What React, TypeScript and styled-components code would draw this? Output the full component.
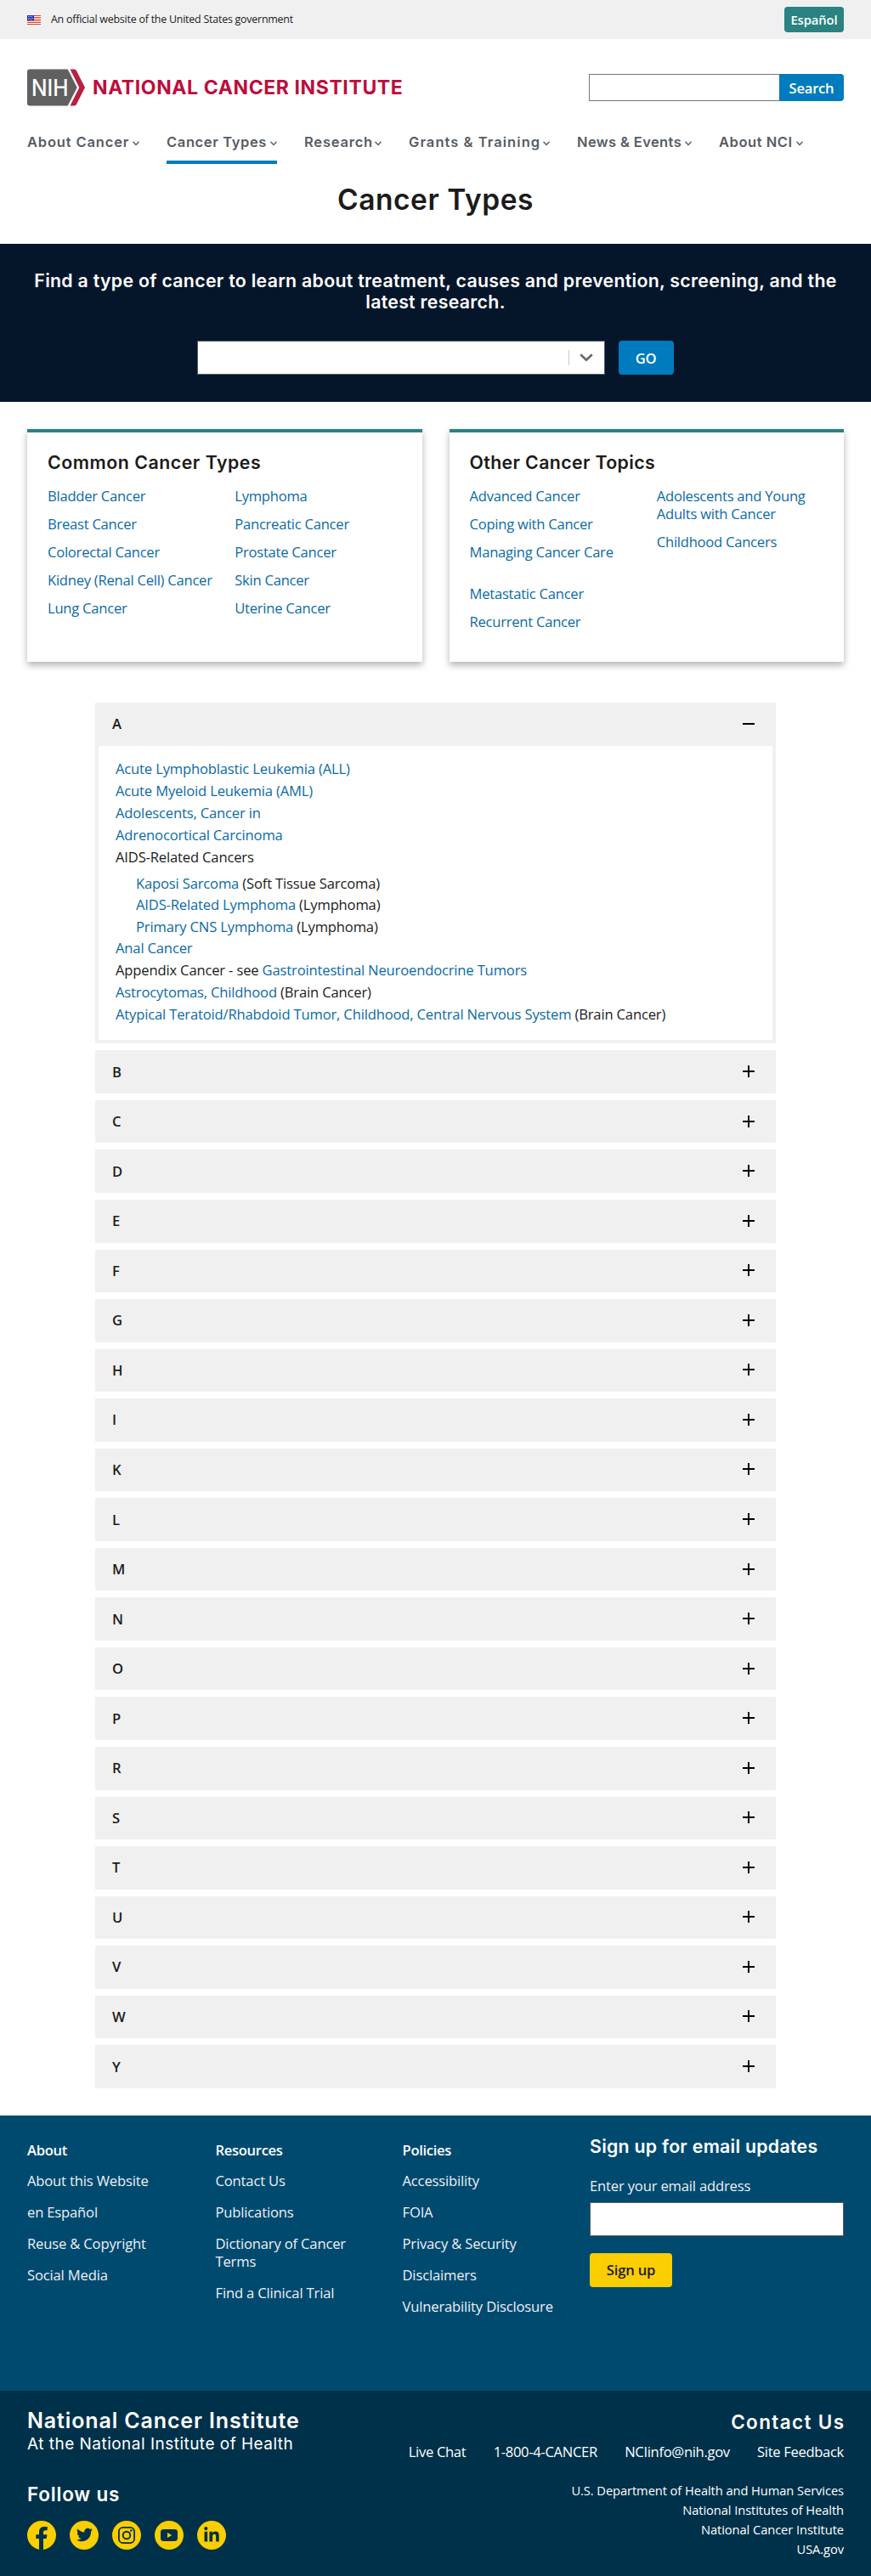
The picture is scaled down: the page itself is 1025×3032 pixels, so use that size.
import React from "react";
import styled, { createGlobalStyle } from "styled-components";
import { FaTwitter, FaLinkedinIn } from "react-icons/fa";

const bodyFont = `"Open Sans", "Noto Sans", sans-serif`;
const headFont = `Inter, "Open Sans", sans-serif`;

const GlobalStyle = createGlobalStyle`
  *, *::before, *::after { box-sizing: border-box; }
  body { margin: 0; background: #fff; color: #1b1b1b; font: 16.6px/21px ${bodyFont}; letter-spacing: -0.25px; }
  h1, h2, h3, p, ul { margin: 0; padding: 0; }
  ul { list-style: none; }
  a { color: inherit; text-decoration: none; }
  button, input { font: inherit; letter-spacing: inherit; border: 0; padding: 0; margin: 0; border-radius: 0; }
  svg { display: block; }
`;

const Banner = styled.div`
  display: flex;
  align-items: center;
  height: 46px;
  padding: 0 32px;
  background: #f0f0f0;
  font-size: 12.4px;
  letter-spacing: -0.21px;
  line-height: 16px;
`;
const BannerText = styled.p`
  margin-left: 12px;
`;
const LanguageLink = styled.a`
  width: 70px;
  height: 30px;
  margin-left: auto;
  border-radius: 4px;
  background: #2a8282;
  color: #fff;
  font-size: 14.8px;
  font-weight: 600;
  line-height: 30px;
  letter-spacing: -0.1px;
  text-align: center;
`;

const Header = styled.header`
  padding: 35px 32px 0;
`;
const BrandRow = styled.div`
  display: flex;
  align-items: center;
  justify-content: space-between;
  height: 44px;
`;
const Brand = styled.a`
  display: flex;
  align-items: center;
  gap: 8px;
  color: #bb0e3d;
  font: 700 23px/30px ${headFont};
  letter-spacing: 0.6px;
  white-space: nowrap;
`;
const SearchForm = styled.form`
  display: flex;
  width: 300px;
  height: 32px;
`;
const SearchInput = styled.input`
  flex: 1;
  min-width: 0;
  border: 1px solid #71767a;
  border-right: 0;
  background: #fff;
`;
const SearchButton = styled.button`
  width: 76px;
  border-radius: 0 4px 4px 0;
  background: #007bbd;
  color: #fff;
  font-weight: 600;
`;

const Nav = styled.nav`
  display: flex;
  gap: 32px;
  margin-top: 30px;
`;
const NavItem = styled.a<{ $width: number; $spacing: number; $current?: boolean }>`
  display: flex;
  justify-content: space-between;
  width: ${(p) => p.$width}px;
  padding-bottom: 10px;
  border-bottom: 4px solid ${(p) => (p.$current ? "#007bbd" : "transparent")};
  color: #565c65;
  font: 600 16.5px/24px ${headFont};
  letter-spacing: ${(p) => p.$spacing}px;
  white-space: nowrap;

  svg { margin-top: 11px; flex: none; }
`;
const PageTitle = styled.h1`
  height: 94px;
  padding-top: 18px;
  font: 600 33.5px/48px ${headFont};
  letter-spacing: 0.57px;
  text-align: center;
`;

const Hero = styled.section`
  height: 186px;
  padding: 31px 32px 0;
  background: #05162b;
`;
const HeroText = styled.h2`
  color: #fff;
  font: 600 21.3px/25px ${headFont};
  letter-spacing: 0.29px;
  text-align: center;
`;
const HeroForm = styled.form`
  display: flex;
  justify-content: center;
  gap: 16px;
  margin: 33px 0 0 -1px;
`;
const Combo = styled.div`
  display: flex;
  align-items: center;
  justify-content: flex-end;
  width: 480px;
  height: 40px;
  padding-right: 13px;
  border: 1px solid #565c65;
  background: #fff;
`;
const ComboDivider = styled.span`
  width: 1px;
  height: 18px;
  margin: 0 12px 1px 0;
  background: #c6cace;
`;
const Button = styled.button<{ $kind: "primary" | "accent"; $width: number }>`
  width: ${(p) => p.$width}px;
  height: 40px;
  border-radius: 4px;
  background: ${(p) => (p.$kind === "primary" ? "#007bbd" : "#face00")};
  color: ${(p) => (p.$kind === "primary" ? "#fff" : "#1b1b1b")};
  font-weight: 600;
`;

const Cards = styled.section`
  display: grid;
  grid-template-columns: 1fr 1fr;
  gap: 32px;
  padding: 32px 32px 0;
`;
const Card = styled.article`
  height: 274px;
  padding: 22.4px 24px 0;
  border-top: 4px solid #2a8282;
  background: #fff;
  box-shadow: 0 4px 8px rgba(0, 0, 0, 0.3);
`;
const CardTitle = styled.h3<{ $spacing: number }>`
  font: 600 21.3px/26px ${headFont};
  letter-spacing: ${(p) => p.$spacing}px;
`;
const CardColumns = styled.div`
  display: grid;
  grid-template-columns: 1fr 1fr;
  column-gap: 24px;
  align-items: start;
  margin-top: 15.2px;
`;
const LinkList = styled.ul<{ $gap: number }>`
  display: flex;
  flex-direction: column;
  gap: ${(p) => p.$gap}px;
`;
const LinkGroups = styled.div`
  display: grid;
  gap: 28px;
`;
const Link = styled.a`
  color: #0b6aa6;
`;

const AccordionList = styled.section`
  display: flex;
  flex-direction: column;
  gap: 8px;
  padding: 48px 112px 32px;
`;
const AccordionHeader = styled.button`
  display: flex;
  align-items: center;
  justify-content: space-between;
  width: 100%;
  height: 50.55px;
  padding: 0 25px 1px 20px;
  background: #f0f0f0;
  color: #1b1b1b;
  font-weight: 600;
`;
const AccordionPanel = styled.div`
  padding: 14px 20px 17px;
  border: solid #f0f0f0;
  border-width: 0 4px 4px;
  line-height: 26px;
  letter-spacing: -0.17px;
`;
const NestedList = styled.ul`
  padding: 5px 0 0 24px;
  line-height: 25.6px;
`;

const FooterTop = styled.footer`
  display: grid;
  grid-template-columns: 189.5px 188px 188.5px 299px;
  column-gap: 32px;
  height: 324px;
  padding: 30px 32px 0;
  background: #004a70;
  color: #f0f0f0;
  letter-spacing: -0.17px;
`;
const FooterHeading = styled.h3`
  margin-bottom: 15px;
  color: #fff;
  font-size: 16.6px;
  font-weight: 600;
  line-height: 21px;
  letter-spacing: -0.32px;
`;
const SignUp = styled.form`
  display: flex;
  flex-direction: column;
  align-items: flex-start;
  margin-top: -7px;
`;
const SignUpTitle = styled.h3`
  color: #fff;
  font: 600 21.3px/26px ${headFont};
  letter-spacing: 0.28px;
`;
const Label = styled.label`
  margin: 23.5px 0 8.5px;
`;
const EmailInput = styled.input`
  width: 100%;
  height: 40px;
  margin-bottom: 20px;
  border: 1px solid #565c65;
  background: #fff;
`;

const FooterBottom = styled.footer`
  display: flex;
  justify-content: space-between;
  height: 218px;
  padding: 20px 32px 0;
  background: #00314a;
  color: #fff;
`;
const Agency = styled.h2`
  font: 600 25px/30px ${headFont};
  letter-spacing: 0.87px;
`;
const AgencySub = styled.p`
  margin-top: 1px;
  font: 400 19px/24px ${headFont};
  letter-spacing: 0.48px;
`;
const FooterTitle = styled.h3<{ $spacing: number }>`
  margin-right: -${(p) => p.$spacing}px;
  font: 600 22.5px/28px ${headFont};
  letter-spacing: ${(p) => p.$spacing}px;
`;
const Follow = styled.div`
  margin-top: 33px;
`;
const SocialRow = styled.div`
  display: flex;
  gap: 16px;
  margin-top: 17px;
`;
const SocialCircle = styled.a`
  display: grid;
  place-items: center;
  width: 34px;
  height: 34px;
  overflow: hidden;
  border-radius: 50%;
  background: #face00;
  color: #00314a;
`;
const Contact = styled.div`
  display: flex;
  flex-direction: column;
  align-items: flex-end;
  padding-top: 3px;
`;
const ContactLinks = styled.div`
  display: flex;
  gap: 32.3px;
  margin: 10px 0 24px;
  letter-spacing: -0.33px;
`;
const AgencyLinks = styled.ul`
  font-size: 14.7px;
  line-height: 23px;
  letter-spacing: -0.08px;
  text-align: right;
`;

const Flag = () => (
  <svg width="16" height="11" viewBox="0 0 16 11" shapeRendering="crispEdges">
    <rect width="16" height="11" fill="#fff" />
    {[0, 2, 4, 6, 8, 10].map((y) => (
      <rect key={y} y={y} width="16" height="1" fill="#db3e1f" />
    ))}
    <rect width="8" height="6" fill="#1e33b1" />
    {[[1, 1], [3, 1], [5, 1], [2, 3], [4, 3], [6, 3], [1, 4], [3, 5], [5, 5]].map(([x, y]) => (
      <rect key={`${x}-${y}`} x={x} y={y} width="1" height="1" fill="#d6dbf5" />
    ))}
  </svg>
);

const NihMark = () => (
  <svg width="69" height="44" viewBox="0 0 69 44">
    <path d="M3 .5H47.7L58.7 22 47.7 43.5H3Q0 43.5 0 40.5V3.5Q0 .5 3 .5Z" fill="#606060" />
    <path d="M50.5 .5H55.3Q57 .5 57.9 2L68 22 57.9 42Q57 43.5 55.3 43.5H50.5L61.3 22Z" fill="#ba1f40" />
    <text x="5" y="31.6" fill="#fff" fontFamily="Inter, sans-serif" fontSize="26.5" fontWeight="500" letterSpacing="0" textLength="43.5" lengthAdjust="spacingAndGlyphs">NIH</text>
  </svg>
);

const NavChevron = () => (
  <svg width="8" height="6" viewBox="0 0 8 6">
    <path d="M.5 .8 4 4.4 7.5 .8" fill="none" stroke="#565c65" strokeWidth="1.4" />
  </svg>
);

const ComboChevron = () => (
  <svg width="16" height="10" viewBox="0 0 16 10">
    <path d="M1.2 1.2 8 7.8 14.8 1.2" fill="none" stroke="#666" strokeWidth="2.6" />
  </svg>
);

const ToggleIcon = ({ open }: { open: boolean }) => (
  <svg width="14" height="14" viewBox="0 0 14 14">
    <path d={open ? "M0 7H14" : "M0 7H14M7 0V14"} stroke="#000" strokeWidth="2" shapeRendering="crispEdges" />
  </svg>
);

const FacebookIcon = () => (
  <svg width="34" height="34" viewBox="0 0 34 34" fill="currentColor">
    <path d="M14 34V21H10.3V16.2H14V13.2C14 9 16.5 7 20 7H23.7V11.3H21.3C19.6 11.3 19 12.3 19 13.8V16.2H23.4L22.7 21H19V34Z" />
  </svg>
);
const InstagramIcon = () => (
  <svg width="34" height="34" viewBox="0 0 34 34" fill="none" stroke="currentColor">
    <rect x="7.9" y="7.9" width="18.2" height="18.2" rx="4.8" strokeWidth="1.8" />
    <circle cx="17" cy="17" r="4.3" strokeWidth="1.9" />
    <circle cx="22.4" cy="11.5" r="1.3" fill="currentColor" stroke="none" />
  </svg>
);
const YoutubeIcon = () => (
  <svg width="34" height="34" viewBox="0 0 34 34">
    <rect x="7" y="10" width="20" height="14" rx="3.4" fill="currentColor" />
    <path d="M15 13.9 20.2 17 15 20.1Z" fill="#face00" />
  </svg>
);

const navItems = [
  { label: "About Cancer", width: 132, spacing: 0.84 },
  { label: "Cancer Types", width: 130, spacing: 0.63, current: true },
  { label: "Research", width: 91, spacing: 0.79 },
  { label: "Grants & Training", width: 166, spacing: 1.05 },
  { label: "News & Events", width: 135, spacing: 0.38 },
  { label: "About NCI", width: 99, spacing: 0.55 },
];

const commonTypes = [
  ["Bladder Cancer", "Breast Cancer", "Colorectal Cancer", "Kidney (Renal Cell) Cancer", "Lung Cancer"],
  ["Lymphoma", "Pancreatic Cancer", "Prostate Cancer", "Skin Cancer", "Uterine Cancer"],
];

type Entry = { before?: string; link?: string; after?: string; children?: Entry[] };
const entries: Entry[] = [
  { link: "Acute Lymphoblastic Leukemia (ALL)" },
  { link: "Acute Myeloid Leukemia (AML)" },
  { link: "Adolescents, Cancer in" },
  { link: "Adrenocortical Carcinoma" },
  {
    before: "AIDS-Related Cancers",
    children: [
      { link: "Kaposi Sarcoma", after: " (Soft Tissue Sarcoma)" },
      { link: "AIDS-Related Lymphoma", after: " (Lymphoma)" },
      { link: "Primary CNS Lymphoma", after: " (Lymphoma)" },
    ],
  },
  { link: "Anal Cancer" },
  { before: "Appendix Cancer - see ", link: "Gastrointestinal Neuroendocrine Tumors" },
  { link: "Astrocytomas, Childhood", after: " (Brain Cancer)" },
  { link: "Atypical Teratoid/Rhabdoid Tumor, Childhood, Central Nervous System", after: " (Brain Cancer)" },
];

const footerColumns = [
  { title: "About", links: ["About this Website", "en Español", "Reuse & Copyright", "Social Media"] },
  { title: "Resources", links: ["Contact Us", "Publications", "Dictionary of Cancer Terms", "Find a Clinical Trial"] },
  { title: "Policies", links: ["Accessibility", "FOIA", "Privacy & Security", "Disclaimers", "Vulnerability Disclosure"] },
];

const Links = ({ items, gap = 12 }: { items: string[]; gap?: number }) => (
  <LinkList $gap={gap}>
    {items.map((item) => (
      <li key={item}><Link href="#">{item}</Link></li>
    ))}
  </LinkList>
);

const EntryRow = ({ entry }: { entry: Entry }) => (
  <li>
    {entry.before}
    {entry.link && <Link href="#">{entry.link}</Link>}
    {entry.after}
    {entry.children && (
      <NestedList>
        {entry.children.map((child) => <EntryRow key={child.link} entry={child} />)}
      </NestedList>
    )}
  </li>
);

export default function App() {
  return (
    <>
      <GlobalStyle />
      <Banner>
        <Flag />
        <BannerText>An official website of the United States government</BannerText>
        <LanguageLink href="#">Español</LanguageLink>
      </Banner>

      <Header>
        <BrandRow>
          <Brand href="#"><NihMark />NATIONAL CANCER INSTITUTE</Brand>
          <SearchForm>
            <SearchInput aria-label="Search" />
            <SearchButton type="button">Search</SearchButton>
          </SearchForm>
        </BrandRow>
        <Nav>
          {navItems.map((item) => (
            <NavItem key={item.label} href="#" $width={item.width} $spacing={item.spacing} $current={item.current}>
              {item.label}
              <NavChevron />
            </NavItem>
          ))}
        </Nav>
      </Header>

      <main>
        <PageTitle>Cancer Types</PageTitle>
        <Hero>
          <HeroText>
            Find a type of cancer to learn about treatment, causes and prevention, screening, and the
            latest research.
          </HeroText>
          <HeroForm>
            <Combo><ComboDivider /><ComboChevron /></Combo>
            <Button type="button" $kind="primary" $width={65}>GO</Button>
          </HeroForm>
        </Hero>

        <Cards>
          <Card>
            <CardTitle $spacing={0.54}>Common Cancer Types</CardTitle>
            <CardColumns>
              {commonTypes.map((items) => <Links key={items[0]} items={items} />)}
            </CardColumns>
          </Card>
          <Card>
            <CardTitle $spacing={0.37}>Other Cancer Topics</CardTitle>
            <CardColumns>
              <LinkGroups>
                <Links items={["Advanced Cancer", "Coping with Cancer", "Managing Cancer Care"]} />
                <Links items={["Metastatic Cancer", "Recurrent Cancer"]} />
              </LinkGroups>
              <Links items={["Adolescents and Young Adults with Cancer", "Childhood Cancers"]} />
            </CardColumns>
          </Card>
        </Cards>

        <AccordionList>
          {"ABCDEFGHIKLMNOPRSTUVWY".split("").map((letter) => (
            <div key={letter}>
              <AccordionHeader type="button">
                {letter}
                <ToggleIcon open={letter === "A"} />
              </AccordionHeader>
              {letter === "A" && (
                <AccordionPanel>
                  <ul>
                    {entries.map((entry, i) => <EntryRow key={i} entry={entry} />)}
                  </ul>
                </AccordionPanel>
              )}
            </div>
          ))}
        </AccordionList>
      </main>

      <FooterTop>
        {footerColumns.map((column) => (
          <div key={column.title}>
            <FooterHeading>{column.title}</FooterHeading>
            <LinkList $gap={16}>
              {column.links.map((link) => <li key={link}><a href="#">{link}</a></li>)}
            </LinkList>
          </div>
        ))}
        <SignUp>
          <SignUpTitle>Sign up for email updates</SignUpTitle>
          <Label htmlFor="email">Enter your email address</Label>
          <EmailInput id="email" />
          <Button type="button" $kind="accent" $width={97}>Sign up</Button>
        </SignUp>
      </FooterTop>

      <FooterBottom>
        <div>
          <Agency>National Cancer Institute</Agency>
          <AgencySub>At the National Institute of Health</AgencySub>
          <Follow>
            <FooterTitle $spacing={0.8}>Follow us</FooterTitle>
            <SocialRow>
              <SocialCircle href="#" aria-label="Facebook"><FacebookIcon /></SocialCircle>
              <SocialCircle href="#" aria-label="Twitter"><FaTwitter size={19} /></SocialCircle>
              <SocialCircle href="#" aria-label="Instagram"><InstagramIcon /></SocialCircle>
              <SocialCircle href="#" aria-label="YouTube"><YoutubeIcon /></SocialCircle>
              <SocialCircle href="#" aria-label="LinkedIn"><FaLinkedinIn size={20} /></SocialCircle>
            </SocialRow>
          </Follow>
        </div>
        <Contact>
          <FooterTitle $spacing={1.35}>Contact Us</FooterTitle>
          <ContactLinks>
            {["Live Chat", "1-800-4-CANCER", "NCIinfo@nih.gov", "Site Feedback"].map((link) => (
              <a key={link} href="#">{link}</a>
            ))}
          </ContactLinks>
          <AgencyLinks>
            {["U.S. Department of Health and Human Services", "National Institutes of Health", "National Cancer Institute", "USA.gov"].map((link) => (
              <li key={link}><a href="#">{link}</a></li>
            ))}
          </AgencyLinks>
        </Contact>
      </FooterBottom>
    </>
  );
}
